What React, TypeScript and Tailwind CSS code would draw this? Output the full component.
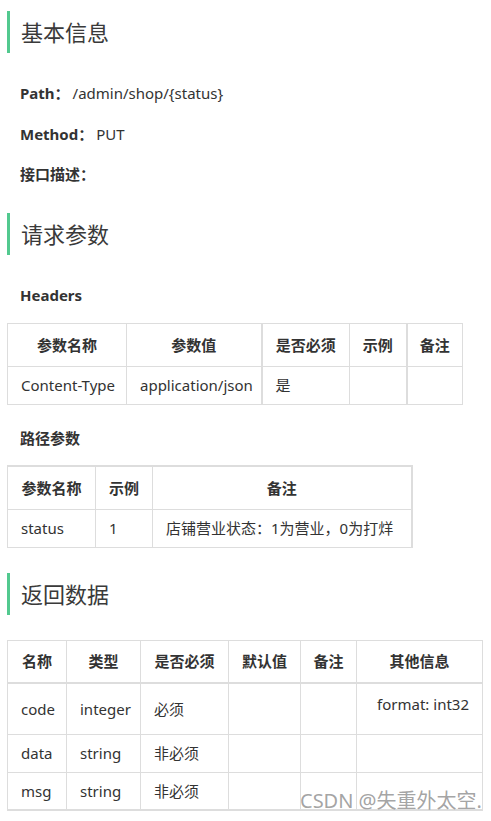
import React from "react";

const font = { fontFamily: '"Noto Sans", "Noto Sans CJK SC", sans-serif' };

function Heading({ children }: { children: React.ReactNode }) {
  return (
    <div className="flex items-center h-[42px] border-l-[3px] border-[#52c98f] pl-[11px]">
      <span className="text-[22px] leading-none text-[#3a3a3a] font-normal">{children}</span>
    </div>
  );
}

const th = "border border-[#dddddd] font-bold text-center px-0 h-[43px] text-[15px] text-[#333] whitespace-nowrap";
const td = "border border-[#dddddd] text-left pl-[13px] pr-0 h-[38px] text-[15px] text-[#333] font-normal whitespace-nowrap overflow-visible";

export default function App() {
  return (
    <div style={font} className="relative w-[491px] h-[821px] bg-white text-[#333] pl-[7px] pt-[11px] overflow-hidden">
      <Heading>基本信息</Heading>
      <div className="mt-[30px] h-[20px] flex items-center pl-[13px] text-[15px] leading-[20px]">
        <span className="font-bold">Path：</span>
        <span className="ml-[3px]">/admin/shop/&#123;status&#125;</span>
      </div>
      <div className="mt-[21px] h-[20px] flex items-center pl-[13px] text-[15px] leading-[20px]">
        <span className="font-bold">Method：</span>
        <span className="ml-[3px]">PUT</span>
      </div>
      <div className="mt-[20px] h-[20px] flex items-center pl-[13px] text-[15px] leading-[20px]">
        <span className="font-bold">接口描述：</span>
      </div>
      <div className="mt-[29px]">
        <Heading>请求参数</Heading>
      </div>
      <div className="mt-[30px] h-[20px] flex items-center pl-[13px] text-[15px] leading-[20px] font-bold">
        Headers
      </div>
      <table className="mt-[18px] table-fixed border-collapse w-[455px]">
        <colgroup>
          <col className="w-[119px]" />
          <col className="w-[135px]" />
          <col className="w-[88px]" />
          <col className="w-[57px]" />
          <col className="w-[56px]" />
        </colgroup>
        <thead>
          <tr>
            <th className={th}>参数名称</th>
            <th className={th + " border-r-2"}>参数值</th>
            <th className={th}>是否必须</th>
            <th className={th + " border-r-2"}>示例</th>
            <th className={th}>备注</th>
          </tr>
        </thead>
        <tbody>
          <tr>
            <td className={td}>Content-Type</td>
            <td className={td + " border-r-2"}>application/json</td>
            <td className={td}>是</td>
            <td className={td + " border-r-2"}></td>
            <td className={td}></td>
          </tr>
        </tbody>
      </table>
      <div className="mt-[23px] h-[20px] flex items-center pl-[13px] text-[15px] leading-[20px] font-bold">
        路径参数
      </div>
      <table className="mt-[17px] table-fixed border-collapse w-[404px] border-t-2 border-r-2 border-[#dddddd]">
        <colgroup>
          <col className="w-[88px]" />
          <col className="w-[57px]" />
          <col className="w-[259px]" />
        </colgroup>
        <thead>
          <tr>
            <th className={th + " border-t-2"}>参数名称</th>
            <th className={th + " border-t-2"}>示例</th>
            <th className={th + " border-t-2 border-r-2"}>备注</th>
          </tr>
        </thead>
        <tbody>
          <tr>
            <td className={td}>status</td>
            <td className={td}>1</td>
            <td className={td + " border-r-2 pl-[12px]"}>店铺营业状态：1为营业，0为打烊</td>
          </tr>
        </tbody>
      </table>
      <div className="mt-[25px]">
        <Heading>返回数据</Heading>
      </div>
      <table className="mt-[25px] table-fixed border-collapse w-[475px]">
        <colgroup>
          <col className="w-[59px]" />
          <col className="w-[74px]" />
          <col className="w-[88px]" />
          <col className="w-[72px]" />
          <col className="w-[56px]" />
          <col className="w-[126px]" />
        </colgroup>
        <thead>
          <tr>
            <th className={th + " border-b-2"}>名称</th>
            <th className={th + " border-b-2"}>类型</th>
            <th className={th + " border-b-2"}>是否必须</th>
            <th className={th + " border-b-2"}>默认值</th>
            <th className={th + " border-b-2"}>备注</th>
            <th className={th + " border-b-2"}>其他信息</th>
          </tr>
        </thead>
        <tbody>
          <tr>
            <td className={td + " h-[51px]"}>code</td>
            <td className={td + " h-[51px]"}>integer</td>
            <td className={td + " h-[51px]"}>必须</td>
            <td className={td + " h-[51px]"}></td>
            <td className={td + " h-[51px]"}></td>
            <td className={td + " h-[51px] align-top text-right pr-[13px] pt-[10px] leading-[20px]"}>format: int32</td>
          </tr>
          <tr>
            <td className={td}>data</td>
            <td className={td}>string</td>
            <td className={td}>非必须</td>
            <td className={td}></td>
            <td className={td}></td>
            <td className={td}></td>
          </tr>
          <tr>
            <td className={td + " border-b-2"}>msg</td>
            <td className={td + " border-b-2"}>string</td>
            <td className={td + " border-b-2"}>非必须</td>
            <td className={td + " border-b-2"}></td>
            <td className={td + " border-b-2"}></td>
            <td className={td + " border-b-2"}></td>
          </tr>
        </tbody>
      </table>
      <div className="absolute left-[300px] top-[788px] text-[20px] leading-[26px] text-[#999999]/90 whitespace-nowrap">
        CSDN @失重外太空.
      </div>
    </div>
  );
}
